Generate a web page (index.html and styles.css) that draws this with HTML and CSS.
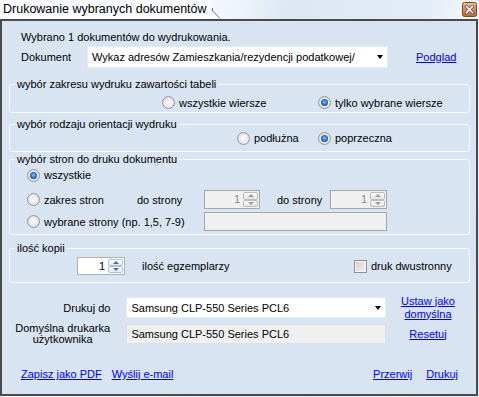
FILE: index.html
```html
<!DOCTYPE html>
<html lang="pl">
<head>
<meta charset="utf-8">
<title>Drukowanie wybranych dokumentów</title>
<link rel="stylesheet" href="styles.css">
</head>
<body>
<div class="window">
  <div class="titlebar">
    <div class="tab">Drukowanie wybranych dokumentów</div>
    <svg class="tab-edge" width="14" height="19" viewBox="0 0 14 19">
      <polygon points="0,0 3,0 3,10 12,19 0,19" fill="#f9fbfe"/>
      <polyline points="3.5,8 3.5,11 11,18.5" fill="none" stroke="#6f7378" stroke-width="1"/>
      <polyline points="4.5,11 10,16.5" fill="none" stroke="#c9ced4" stroke-width="1"/>
    </svg>
    <svg class="close" width="15" height="15" viewBox="0 0 15 15">
      <defs>
        <linearGradient id="cg" x1="0" y1="0" x2="0" y2="1">
          <stop offset="0" stop-color="#f1c28e"/>
          <stop offset="0.5" stop-color="#d58e4c"/>
          <stop offset="1" stop-color="#b86a2c"/>
        </linearGradient>
      </defs>
      <rect x="0.5" y="0.5" width="14" height="14" rx="2" fill="url(#cg)" stroke="#7b4b22"/>
      <path d="M4.5 4.5 L10.5 10.5 M10.5 4.5 L4.5 10.5" stroke="#5a3a6e" stroke-width="3" stroke-linecap="square"/>
      <path d="M4.5 4.5 L10.5 10.5 M10.5 4.5 L4.5 10.5" stroke="#ffffff" stroke-width="1.6" stroke-linecap="square"/>
    </svg>
  </div>

  <div class="panel">
    <div class="info">Wybrano 1 dokumentów do wydrukowania.</div>

    <div class="doc-row">
      <span class="doc-lbl">Dokument</span>
      <div class="combo doc-combo"><span class="combo-text">Wykaz adresów Zamieszkania/rezydencji podatkowej/</span><i class="arrow"></i></div>
      <a class="link preview" href="#">Podglad</a>
    </div>

    <fieldset class="group g1">
      <legend>wybór zakresu wydruku zawartości tabeli</legend>
      <div class="opts">
        <label class="radio r-w1"><span class="rb"></span>wszystkie wiersze</label>
        <label class="radio"><span class="rb on"></span>tylko wybrane wiersze</label>
      </div>
    </fieldset>

    <fieldset class="group g2">
      <legend>wybór rodzaju orientacji wydruku</legend>
      <div class="opts">
        <label class="radio r-w2"><span class="rb"></span>podłużna</label>
        <label class="radio"><span class="rb on"></span>poprzeczna</label>
      </div>
    </fieldset>

    <fieldset class="group g3">
      <legend>wybór stron do druku dokumentu</legend>
      <div class="pg-row pg1">
        <label class="radio"><span class="rb on"></span>wszystkie</label>
      </div>
      <div class="pg-row pg2">
        <label class="radio c-range"><span class="rb"></span>zakres stron</label>
        <span class="c-to1">do strony</span>
        <div class="spin dis s-from"><span class="val">1</span><span class="btns"><span class="sb up"></span><span class="sb dn"></span></span></div>
        <span class="c-to2">do strony</span>
        <div class="spin dis s-to"><span class="val">1</span><span class="btns"><span class="sb up"></span><span class="sb dn"></span></span></div>
      </div>
      <div class="pg-row pg3">
        <label class="radio c-sel"><span class="rb"></span>wybrane strony (np. 1,5, 7-9)</label>
        <div class="textbox dis-box"></div>
      </div>
    </fieldset>

    <fieldset class="group g4">
      <legend>ilość kopii</legend>
      <div class="copies">
        <div class="spin en s-copies"><span class="val">1</span><span class="btns"><span class="sb up"></span><span class="sb dn"></span></span></div>
        <span class="c-copies">ilość egzemplarzy</span>
        <label class="check"><span class="cb"></span>druk dwustronny</label>
      </div>
    </fieldset>

    <div class="pr-row pr1">
      <span class="pr-lbl">Drukuj do</span>
      <div class="combo pr-combo"><span class="combo-text">Samsung CLP-550 Series PCL6</span><i class="arrow"></i></div>
      <a class="link pr-link" href="#">Ustaw jako<br>domyślna</a>
    </div>
    <div class="pr-row pr2">
      <span class="pr-lbl pr-lbl2">Domyślna drukarka<br>użytkownika</span>
      <div class="combo ro-box"><span class="combo-text">Samsung CLP-550 Series PCL6</span></div>
      <a class="link pr-link" href="#">Resetuj</a>
    </div>

    <div class="bottom">
      <a class="link" href="#">Zapisz jako PDF</a>
      <a class="link l-mail" href="#">Wyślij e-mail</a>
      <a class="link l-cancel" href="#">Przerwij</a>
      <a class="link l-print" href="#">Drukuj</a>
    </div>
  </div>
</div>
</body>
</html>
```

FILE: styles.css
```css
* { box-sizing: border-box; }
html, body { margin: 0; padding: 0; }
body {
  width: 479px;
  height: 397px;
  overflow: hidden;
  font-family: "Liberation Sans", Arial, sans-serif;
  font-size: 11px;
  color: #000;
  background: #eef3f9;
}

.window {
  width: 479px;
  height: 397px;
  display: flex;
  flex-direction: column;
  background: linear-gradient(100deg, #f7fafd 0%, #f2f6fb 42%, #dde8f4 52%, #e3ecf6 78%, #f3f7fc 86%, #e0eaf5 94%, #dde8f4 100%);
}

/* title bar */
.titlebar {
  height: 19px;
  display: flex;
  align-items: flex-start;
  flex: none;
}
.tab {
  width: 209px;
  height: 19px;
  padding: 1px 0 0 3px;
  font-size: 12.5px;
  line-height: 16px;
  background: #f9fbfe;
  white-space: nowrap;
}
.tab-edge { flex: none; }
.close {
  margin-left: auto;
  margin-top: 2px;
  margin-right: 2px;
  flex: none;
}

/* main panel */
.panel {
  height: 377px;
  width: 478px;
  flex: none;
  border: 2px solid #4a4a4a;
  background: #d8e4f2;
  padding: 0 6px 0 7px;
  display: flex;
  flex-direction: column;
}

.info {
  margin-top: 10px;
  line-height: 13px;
  padding-left: 12px;
}

.doc-row {
  margin-top: 2px;
  height: 22px;
  display: flex;
  align-items: center;
}
.doc-lbl {
  width: 78px;
  padding-left: 12px;
}

.combo {
  height: 100%;
  background: #fff;
  border: 1px solid #e4ebf3;
  display: flex;
  align-items: center;
  padding-left: 4px;
  position: relative;
}
.combo-text { flex: 1; white-space: nowrap; }
.arrow {
  width: 0;
  height: 0;
  border-left: 3.5px solid transparent;
  border-right: 3.5px solid transparent;
  border-top: 4px solid #000;
  margin-right: 4px;
  flex: none;
}
.doc-combo { width: 301px; }
.preview { margin-left: 28px; }

.link {
  color: #0000ff;
  text-decoration: underline;
  line-height: 13px;
}

/* group boxes */
.group {
  margin: 0;
  padding: 0;
  border: 1px solid #f8fafd;
  border-radius: 3px;
  min-width: 0;
}
.group legend {
  padding: 0 2px;
  margin-left: 5px;
  line-height: 13px;
}
.g1 { margin-top: 10px; }
.g2 { margin-top: 5px; }
.g3 { margin-top: 1px; }
.g4 { margin-top: 7px; }

.opts {
  display: flex;
  align-items: center;
}
.g1 .opts { padding-left: 152px; margin-top: 2px; height: 19px; }
.g2 .opts { padding-left: 227px; height: 14px; margin-bottom: 6px; }
.r-w1 { width: 156px; }
.r-w2 { width: 81px; }

.radio, .check {
  display: flex;
  align-items: center;
  white-space: nowrap;
}
.rb {
  width: 13px;
  height: 13px;
  border-radius: 50%;
  border: 1px solid #969696;
  background: radial-gradient(circle at 50% 50%, #fafafa 0, #f0f0f0 40%, #d0d0d0 100%);
  margin-right: 4px;
  flex: none;
  position: relative;
}
.rb.on::after {
  content: "";
  position: absolute;
  left: 2px;
  top: 2px;
  width: 7px;
  height: 7px;
  border-radius: 50%;
  background: radial-gradient(circle at 50% 45%, #8fd0ff 0, #3a86de 35%, #17489e 75%, #0f3577 100%);
}

/* page selection */
.pg-row {
  display: flex;
  align-items: center;
  padding-left: 17px;
}
.pg1 { height: 18px; }
.pg2 { height: 19px; margin-top: 6px; }
.pg3 { height: 19px; margin-top: 3px; margin-bottom: 3px; }
.c-range { width: 110px; }
.c-to1 { width: 67px; }
.c-to2 { width: 53px; margin-left: 17px; }
.c-sel { width: 177px; }

.spin {
  display: flex;
  height: 100%;
  border: 1px solid #a7a7a7;
}
.spin.dis { background: #f0f0f0; }
.spin.en { background: #fff; border-color: #a9b1bb; }
.s-from { width: 56px; }
.s-to { width: 57px; }
.val {
  flex: 1;
  text-align: right;
  padding-right: 3px;
  line-height: 16px;
}
.dis .val { color: #8a8a8a; }
.btns {
  width: 16px;
  display: flex;
  flex-direction: column;
  padding: 1px 1px 1px 0;
}
.sb {
  flex: 1;
  border: 1px solid #bcbcbc;
  border-radius: 2px;
  background: linear-gradient(#fbfbfb, #e4e4e4);
  display: flex;
  align-items: center;
  justify-content: center;
}
.en .sb { border-color: #b3bfcc; background: linear-gradient(#fdfeff, #e3ebf4); }
.sb::after {
  content: "";
  width: 0;
  height: 0;
  border-left: 3px solid transparent;
  border-right: 3px solid transparent;
}
.up::after { border-bottom: 3px solid #9a9a9a; }
.dn::after { border-top: 3px solid #9a9a9a; }
.en .up::after { border-bottom-color: #3d6fb6; }
.en .dn::after { border-top-color: #3d6fb6; }

.textbox {
  width: 183px;
  height: 100%;
  border: 1px solid #a7a7a7;
}
.dis-box { background: #f0f0f0; }

/* copies */
.copies {
  display: flex;
  align-items: center;
  padding-left: 67px;
  height: 18px;
  margin-top: 2px;
  margin-bottom: 7px;
}
.s-copies { width: 48px; }
.c-copies { margin-left: 17px; flex: 1; }
.check { width: 115px; }
.cb {
  width: 13px;
  height: 13px;
  border: 1px solid #8e8e8e;
  background: linear-gradient(135deg, #cfcfcf, #f3f3f3);
  box-shadow: inset 0 0 0 1px #f6f6f6;
  margin-right: 4px;
  flex: none;
}

/* printer rows */
.pr-row {
  display: flex;
  align-items: center;
}
.pr1 { margin-top: 14px; height: 21px; }
.pr2 { margin-top: 6px; height: 20px; }
.pr-lbl {
  width: 118px;
  padding-right: 16px;
  text-align: right;
  white-space: nowrap;
}
.pr-lbl2 {
  text-align: center;
  padding-right: 10px;
  padding-left: 0;
  line-height: 11.5px;
}
.pr-combo { width: 261px; }
.ro-box { width: 261px; background: #f0f0f0; border-color: #dcdfe3; }
.pr-link {
  width: 84px;
  text-align: center;
  flex: none;
}

/* bottom links */
.bottom {
  margin-top: 24px;
  display: flex;
  padding-left: 12px;
  line-height: 13px;
}
.l-mail { margin-left: 10px; }
.l-cancel { margin-left: auto; }
.l-print { margin-left: 14px; margin-right: 12px; }
```
